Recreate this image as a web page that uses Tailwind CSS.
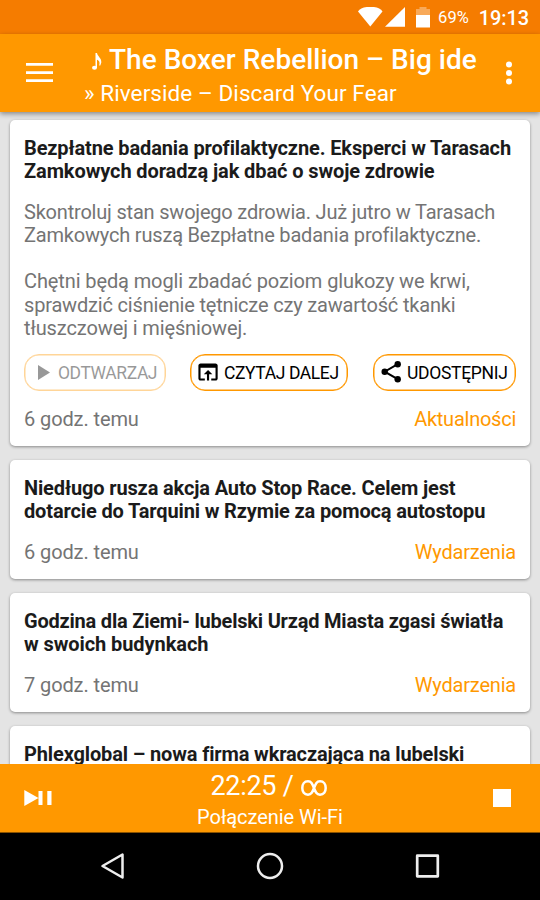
<!DOCTYPE html>
<html lang="pl">
<head>
<meta charset="utf-8">
<title>Radio</title>
<script src="https://cdn.jsdelivr.net/npm/@tailwindcss/browser@4"></script>
</head>
<body class="w-[540px] h-[900px] overflow-hidden font-['Roboto',sans-serif] bg-[#e4e4e4]">
<div class="flex flex-col w-[540px] h-[900px]">
  <!-- Status bar -->
  <div class="h-[34px] shrink-0 bg-[#f57c00] text-white flex items-center justify-end pr-[11px]">
    <svg class="w-[48px] h-[20px] mr-[10px]" viewBox="0 0 48 20" fill="#fff"><path d="M0 4.500Q3-.2 12.300-.2T24.500 4.500L12.300 19.500Z"/><path d="M47 0V19.700H27Z"/></svg>
    <svg class="w-[14px] h-[21px] mr-[8px]" viewBox="0 0 14 21" fill="#fff"><path fill-opacity=".35" d="M0 2H3.500V0H10.500V2H14V8H0Z"/><path d="M0 8H14V20.500H0Z"/></svg>
    <span class="text-[16.500px] leading-[20px] mr-[10px] mt-[1px]">69%</span>
    <span class="text-[20px] leading-[24px] font-medium mt-[2px] tracking-[-0.1px]">19:13</span>
  </div>
  <!-- Toolbar -->
  <header class="relative z-10 h-[78px] shrink-0 bg-[#ff9800] text-white flex shadow-[0_2px_5px_rgba(0,0,0,.4)]">
    <svg class="w-[27px] h-[20px] ml-[26px] mt-[29px]" viewBox="0 0 27 20" fill="#fff"><path d="M0 0H27V2.700H0ZM0 8.200H27V10.900H0ZM0 16.200H27V18.900H0Z"/></svg>
    <div class="ml-[31px] w-[401px] whitespace-nowrap">
      <div class="flex items-center h-[32px] mt-[10px] pl-[8px] text-[28px] font-medium">
        <svg class="w-[10px] h-[17px] mr-[7px] mt-[3px]" viewBox="0 0 10 17" fill="#fff"><ellipse cx="2.500" cy="14.800" rx="2.500" ry="2"/><path d="M3.500 0H5C5.500 3.500 9.800 5 9.300 9.500L8.300 12.500H7.200C8.200 9 7 7.500 5 6.800V15H3.500Z"/></svg>
        <span class="tracking-[0.020px]">The Boxer Rebellion – Big ide</span>
      </div>
      <div class="text-[22.500px] leading-[26px] mt-[4px] tracking-[0.080px]">» Riverside – Discard Your Fear</div>
    </div>
    <svg class="w-[6px] h-[24px] ml-[21px] mt-[27px]" viewBox="0 0 6 24" fill="#fff"><circle cx="3" cy="3.500" r="3"/><circle cx="3" cy="12" r="3"/><circle cx="3" cy="20.500" r="3"/></svg>
  </header>
  <!-- News list -->
  <main class="flex-1 min-h-0 overflow-hidden px-[10px] pt-[8px] flex flex-col gap-[14px] text-[20px] whitespace-nowrap">
    <article class="h-[326px] shrink-0 bg-white rounded-[5px] px-[14px] pt-[17px] shadow-[0_1px_3px_rgba(0,0,0,.4)]">
      <h2 class="font-bold leading-[23px] text-[#1b1b1b] tracking-[-0.125px]">Bezpłatne badania profilaktyczne. Eksperci w Tarasach<br><span class="tracking-[-0.1px]">Zamkowych doradzą jak dbać o swoje zdrowie</span></h2>
      <p class="mt-[18px] leading-[23.150px] text-[#747474] tracking-[-0.2px]">Skontroluj stan swojego zdrowia. Już jutro w Tarasach<br><span class="tracking-[-0.19px]">Zamkowych ruszą Bezpłatne badania profilaktyczne.</span><br><br><span class="tracking-[-0.11px]">Chętni będą mogli zbadać poziom glukozy we krwi,</span><br><span class="tracking-[-0.18px]">sprawdzić ciśnienie tętnicze czy zawartość tkanki</span><br><span class="tracking-[-0.12px]">tłuszczowej i mięśniowej.</span></p>
      <div class="flex justify-between mt-[14px] text-[17.500px] text-black">
        <div class="w-[142px] h-[37px] border border-[#ff9800] shadow-[inset_0_0_0_0.5px_#ff9800] rounded-[15px] flex items-center pl-[13px] opacity-40">
          <svg class="w-[12px] h-[15px] mr-[8px]" viewBox="0 0 12 15"><path d="M0 0L12 7.500L0 15Z"/></svg><span class="mt-[2px] tracking-[-0.42px]">ODTWARZAJ</span>
        </div>
        <div class="w-[158px] h-[37px] border border-[#ff9800] shadow-[inset_0_0_0_0.5px_#ff9800] rounded-[15px] flex items-center pl-[5px] -ml-px">
          <svg class="w-[24px] h-[24px] mr-[4px]" viewBox="0 0 24 24"><path transform="translate(-.8 -.8) scale(1.070)" d="M19 4H5c-1.110 0-2 .9-2 2v12c0 1.100.89 2 2 2h4v-2H5V8h14v10h-4v2h4c1.100 0 2-.9 2-2V6c0-1.100-.89-2-2-2zm-7 6l-4 4h3v6h2v-6h3l-4-4z"/></svg><span class="mt-[2px] tracking-[-0.4px]">CZYTAJ DALEJ</span>
        </div>
        <div class="w-[143px] h-[37px] border border-[#ff9800] shadow-[inset_0_0_0_0.5px_#ff9800] rounded-[15px] flex items-center pl-[5px]">
          <svg class="w-[24px] h-[24px] mr-[4px]" viewBox="0 0 24 24"><path d="M18.700 4.200L5.700 11.700L18.700 19.200" fill="none" stroke="#000" stroke-width="2"/><circle cx="18.700" cy="4.200" r="3.200"/><circle cx="5.700" cy="11.700" r="3.200"/><circle cx="18.700" cy="19.200" r="3.200"/></svg><span class="mt-[2px] tracking-[-0.3px]">UDOSTĘPNIJ</span>
        </div>
      </div>
      <div class="flex justify-between mt-[16px] leading-[24px] text-[#747474]"><span class="tracking-[-0.1px]">6 godz. temu</span><span class="text-[#ff9800] tracking-[-0.25px]">Aktualności</span></div>
    </article>
    <article class="h-[119px] shrink-0 bg-white rounded-[5px] px-[14px] pt-[17px] shadow-[0_1px_3px_rgba(0,0,0,.4)]">
      <h2 class="font-bold leading-[23.200px] text-[#1b1b1b] tracking-[-0.14px]">Niedługo rusza akcja Auto Stop Race. Celem jest<br>dotarcie do Tarquini w Rzymie za pomocą autostopu</h2>
      <div class="flex justify-between mt-[17px] leading-[24px] text-[#747474]"><span class="tracking-[-0.1px]">6 godz. temu</span><span class="text-[#ff9800] tracking-[-0.2px]">Wydarzenia</span></div>
    </article>
    <article class="h-[119px] shrink-0 bg-white rounded-[5px] px-[14px] pt-[17px] shadow-[0_1px_3px_rgba(0,0,0,.4)]">
      <h2 class="font-bold leading-[23.200px] text-[#1b1b1b] tracking-[-0.21px]">Godzina dla Ziemi- lubelski Urząd Miasta zgasi światła<br><span class="tracking-[-0.080px]">w swoich budynkach</span></h2>
      <div class="flex justify-between mt-[17px] leading-[24px] text-[#747474]"><span class="tracking-[-0.1px]">7 godz. temu</span><span class="text-[#ff9800] tracking-[-0.2px]">Wydarzenia</span></div>
    </article>
    <article class="h-[119px] shrink-0 bg-white rounded-[5px] px-[14px] pt-[17px] shadow-[0_1px_3px_rgba(0,0,0,.4)]">
      <h2 class="font-bold leading-[23.200px] text-[#1b1b1b] tracking-[-0.14px]">Phlexglobal – nowa firma wkraczająca na lubelski</h2>
    </article>
  </main>
  <!-- Player -->
  <footer class="h-[69px] shrink-0 bg-[#ff9800] border-b border-[#8a5200] text-white flex justify-between pl-[24px] pr-[29px]">
    <svg class="w-[28px] h-[16px] mt-[26px]" viewBox="0 0 28 16" fill="#fff"><path d="M.3 0L14.500 8L.3 16ZM14.500 1H18.500V15H14.500ZM23.300 1H27.500V15H23.300Z"/></svg>
    <div class="text-center w-[200px] ml-[-5px]">
      <div class="flex justify-center items-center text-[27px] leading-[32px] mt-[6px] mr-[2px]"><span class="tracking-[-0.3px]">22:25 /</span>
        <svg class="w-[26px] h-[16px] ml-[8px] mt-[3px]" viewBox="0 0 26 16" fill="none" stroke="#fff" stroke-width="2.500"><path d="M13 8C11.500 4 10.500 1.300 7 1.300C3.200 1.300 1.300 4.300 1.300 8S3.200 14.700 7 14.700C10.500 14.700 11.500 12 13 8S15.500 1.300 19 1.300C22.800 1.300 24.700 4.300 24.700 8S22.800 14.700 19 14.700C15.500 14.700 14.500 12 13 8Z"/></svg></div>
      <div class="text-[20px] leading-[24px] mt-[3px] tracking-[-0.050px]">Połączenie Wi-Fi</div>
    </div>
    <div class="w-[18px] h-[18px] mt-[25px] bg-white"></div>
  </footer>
  <!-- System navigation -->
  <nav class="h-[67px] shrink-0 bg-black flex items-start pt-[19px] pl-[99px]">
    <svg class="w-[26px] h-[28px]" viewBox="0 0 26 28" fill="none" stroke="#eee" stroke-width="2.500" stroke-linejoin="round"><path d="M23.500 2.500V25.500L3.500 14Z"/></svg>
    <svg class="w-[28px] h-[28px] ml-[131px]" viewBox="0 0 28 28" fill="none" stroke="#eee" stroke-width="2.500"><circle cx="14" cy="14" r="12"/></svg>
    <svg class="w-[26px] h-[28px] ml-[131px]" viewBox="0 0 26 28" fill="none" stroke="#eee" stroke-width="2.700" stroke-linejoin="round"><path d="M2.200 3.700H22.800V24.300H2.200Z"/></svg>
  </nav>
</div>
</body>
</html>
